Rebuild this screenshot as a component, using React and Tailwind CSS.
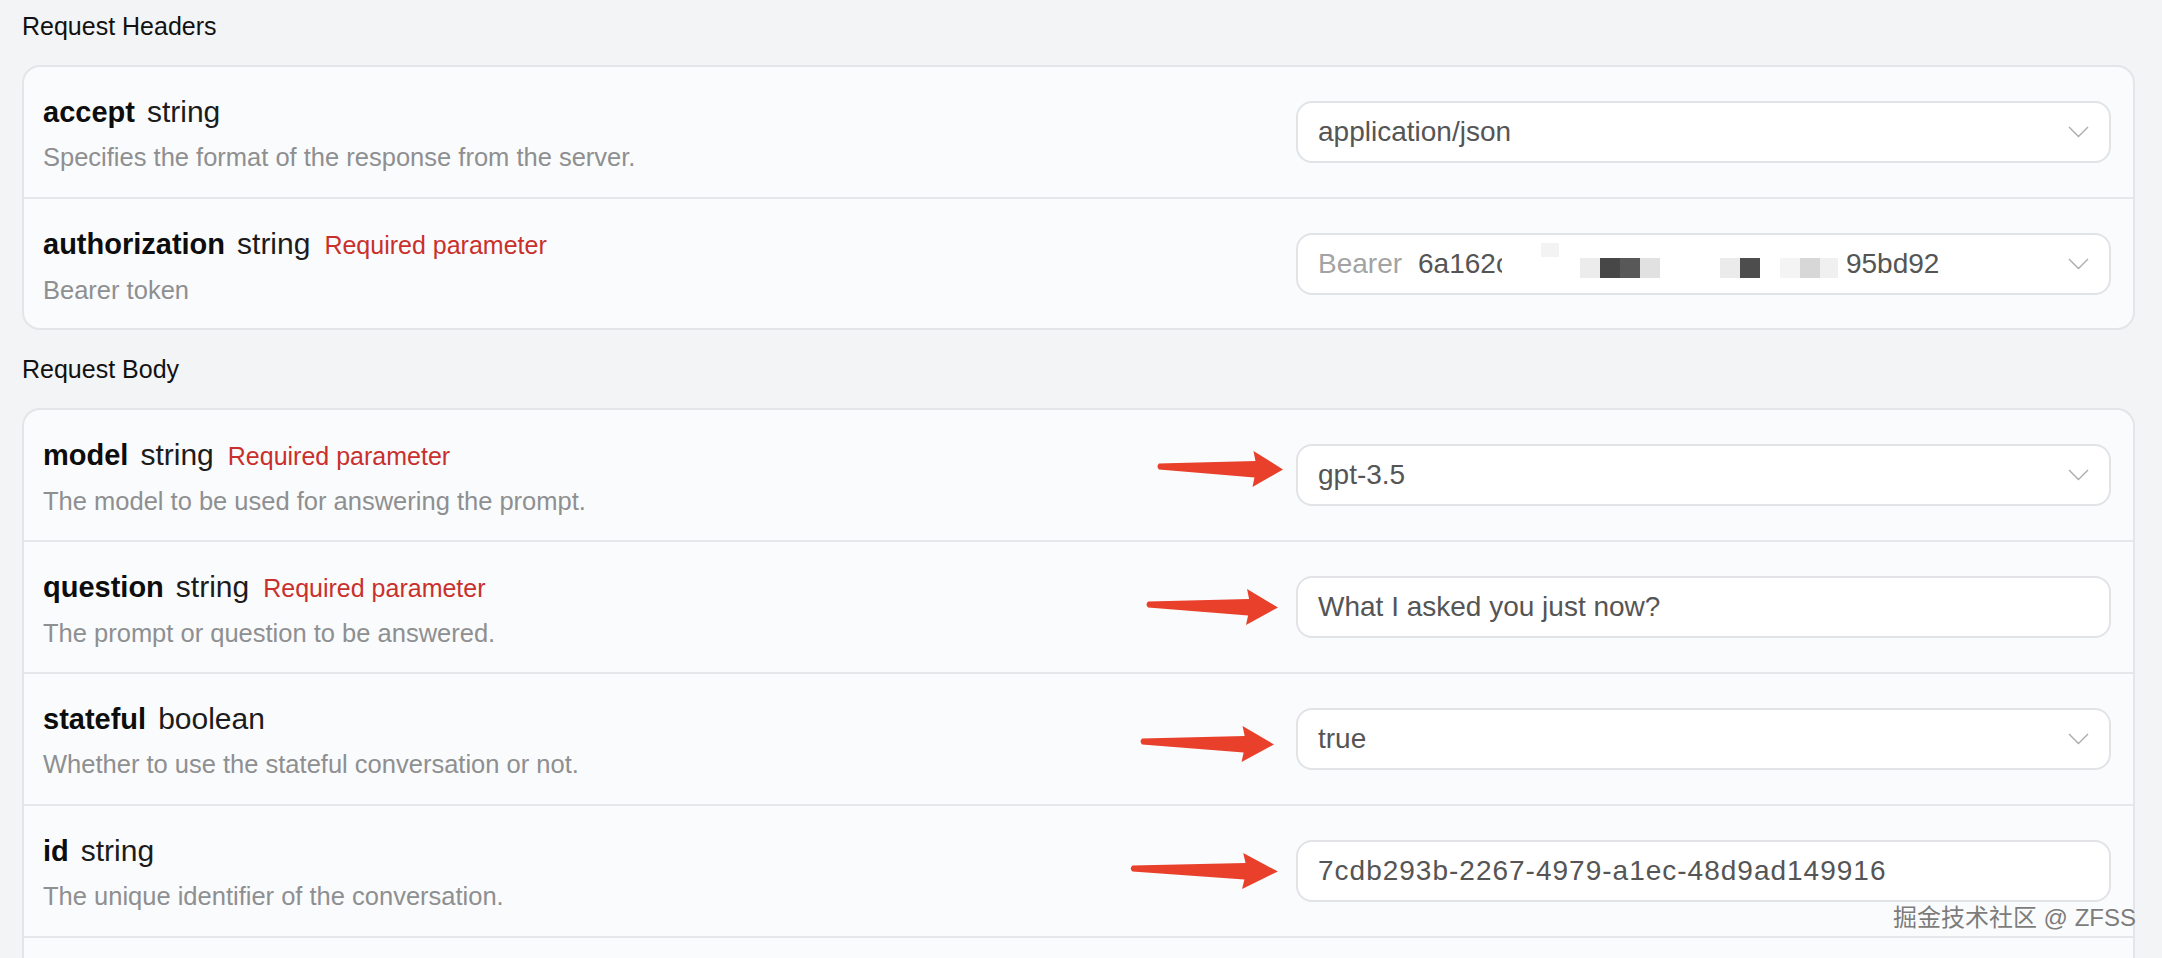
import React from 'react';

const headerParams = [
  {
    name: 'accept',
    type: 'string',
    desc: 'Specifies the format of the response from the server.',
    value: 'application/json',
    select: true,
  },
  {
    name: 'authorization',
    type: 'string',
    required: true,
    desc: 'Bearer token',
    bearer: true,
    select: true,
  },
];

const bodyParams = [
  {
    name: 'model',
    type: 'string',
    required: true,
    desc: 'The model to be used for answering the prompt.',
    value: 'gpt-3.5',
    select: true,
    arrow: { w: 'w-[128px]', gap: 'right-[calc(100%+14px)]', dy: '-mt-[6px]' },
  },
  {
    name: 'question',
    type: 'string',
    required: true,
    desc: 'The prompt or question to be answered.',
    value: 'What I asked you just now?',
    arrow: { w: 'w-[134px]', gap: 'right-[calc(100%+19px)]', dy: 'mt-0' },
  },
  {
    name: 'stateful',
    type: 'boolean',
    desc: 'Whether to use the stateful conversation or not.',
    value: 'true',
    select: true,
    arrow: { w: 'w-[136px]', gap: 'right-[calc(100%+23px)]', dy: 'mt-[5px]' },
  },
  {
    name: 'id',
    type: 'string',
    desc: 'The unique identifier of the conversation.',
    value: '7cdb293b-2267-4979-a1ec-48d9ad149916',
    wide: true,
    arrow: { w: 'w-[150px]', gap: 'right-[calc(100%+19px)]', dy: 'mt-0' },
  },
];

// mosaic blocks over the token
const mosaic = [
  { c: 'left-[204px] top-[10px] h-[44px] w-[38px] bg-white' },
  { c: 'left-[243px] top-[8px] h-[14px] w-[18px] bg-[#f3f3f3]' },
  { c: 'left-[282px] top-[23px] h-[20px] w-[20px] bg-[#ececec]' },
  { c: 'left-[302px] top-[23px] h-[20px] w-[20px] bg-[#474747]' },
  { c: 'left-[322px] top-[23px] h-[20px] w-[20px] bg-[#585858]' },
  { c: 'left-[342px] top-[23px] h-[20px] w-[20px] bg-[#e1e1e1]' },
  { c: 'left-[422px] top-[23px] h-[20px] w-[20px] bg-[#ebebeb]' },
  { c: 'left-[442px] top-[23px] h-[20px] w-[20px] bg-[#4d4d4d]' },
  { c: 'left-[482px] top-[23px] h-[20px] w-[20px] bg-[#f4f4f4]' },
  { c: 'left-[502px] top-[23px] h-[20px] w-[20px] bg-[#d7d7d7]' },
  { c: 'left-[522px] top-[23px] h-[20px] w-[18px] bg-[#f0f0f0]' },
];

const Chevron = () => (
  <svg width="21" height="12" viewBox="0 0 21 12" className="ml-auto shrink-0">
    <polyline points="1,1 10.5,10.5 20,1" fill="none" stroke="#a9abae" strokeWidth="1.4" />
  </svg>
);

const Arrow = ({ w, gap, dy }) => (
  <svg
    viewBox="0 0 130 38"
    preserveAspectRatio="none"
    className={`absolute top-1/2 -translate-y-1/2 h-[38px] ${w} ${gap} ${dy}`}
  >
    <path
      d="M3 13.5 L101 11 L99 1 L129 19.5 L98 37 L100 27.5 L3 19.5 Q0 16.5 3 13.5 Z"
      fill="#e8402b"
    />
  </svg>
);

const Row = ({ p, last, h = 'h-[132px]' }) => (
  <div
    className={`flex ${h} items-start justify-between pl-[19px] pr-[22px] ${
      last ? '' : 'border-b-2 border-[#e5e7ea]'
    }`}
  >
    <div className="pt-[27px]">
      <div className="flex items-baseline gap-[12px] leading-[36px]">
        <span className="text-[29px] font-bold text-[#0d0d0d]">{p.name}</span>
        <span className="text-[30px] text-[#1c1c1c]">{p.type}</span>
        {p.required && (
          <span className="ml-[2px] text-[25px] text-[#c9302c]">Required parameter</span>
        )}
      </div>
      <p className="mt-[11px] text-[25.5px] leading-[32px] text-[#8e8f91]">{p.desc}</p>
    </div>

    <div className="relative flex h-[62px] w-[815px] shrink-0 items-center self-center rounded-[16px] border-2 border-[#e1e3e6] bg-white px-[20px]">
      {p.arrow && <Arrow {...p.arrow} />}
      {p.bearer ? (
        <>
          <span className="text-[28px] text-[#a3a3a3]">Bearer</span>
          <span className="ml-[16px] text-[28px] text-[#555555]">6a162c</span>
          <span className="ml-[336px] text-[28px] text-[#555555]">95bd92</span>
          {mosaic.map((m, i) => (
            <div key={i} className={`absolute ${m.c}`} />
          ))}
        </>
      ) : (
        <span className={`text-[28px] text-[#555555] ${p.wide ? 'tracking-[1px]' : ''}`}>
          {p.value}
        </span>
      )}
      {p.select && <Chevron />}
    </div>
  </div>
);

const App = () => {
  return (
    <div className="relative min-h-screen overflow-hidden bg-[#f3f4f6] pl-[22px] pr-[27px] pt-[10px] font-['Liberation_Sans','Noto_Sans_CJK_SC',sans-serif]">
      <h2 className="text-[25px] leading-[32px] text-[#111111]">Request Headers</h2>
      <div className="mt-[23px] rounded-[18px] border-2 border-[#e3e5e8] bg-[#fafbfc]">
        <Row p={headerParams[0]} />
        <Row p={headerParams[1]} last h="h-[129px]" />
      </div>

      <h2 className="mt-[23px] text-[25px] leading-[32px] text-[#111111]">Request Body</h2>
      <div className="mt-[23px] rounded-t-[18px] border-2 border-b-0 border-[#e3e5e8] bg-[#fafbfc]">
        {bodyParams.map((p) => (
          <Row key={p.name} p={p} />
        ))}
        {/* next parameter, below the fold */}
        <div className="h-[130px]" />
      </div>

      {/* watermark */}
      <div className="absolute right-[26px] top-[902px] text-[24px] leading-[32px] text-[#7c7c7c] [text-shadow:0_0_2px_#ffffff,0_0_1px_#ffffff]">
        掘金技术社区 @ ZFSS
      </div>
    </div>
  );
};

export default App;
